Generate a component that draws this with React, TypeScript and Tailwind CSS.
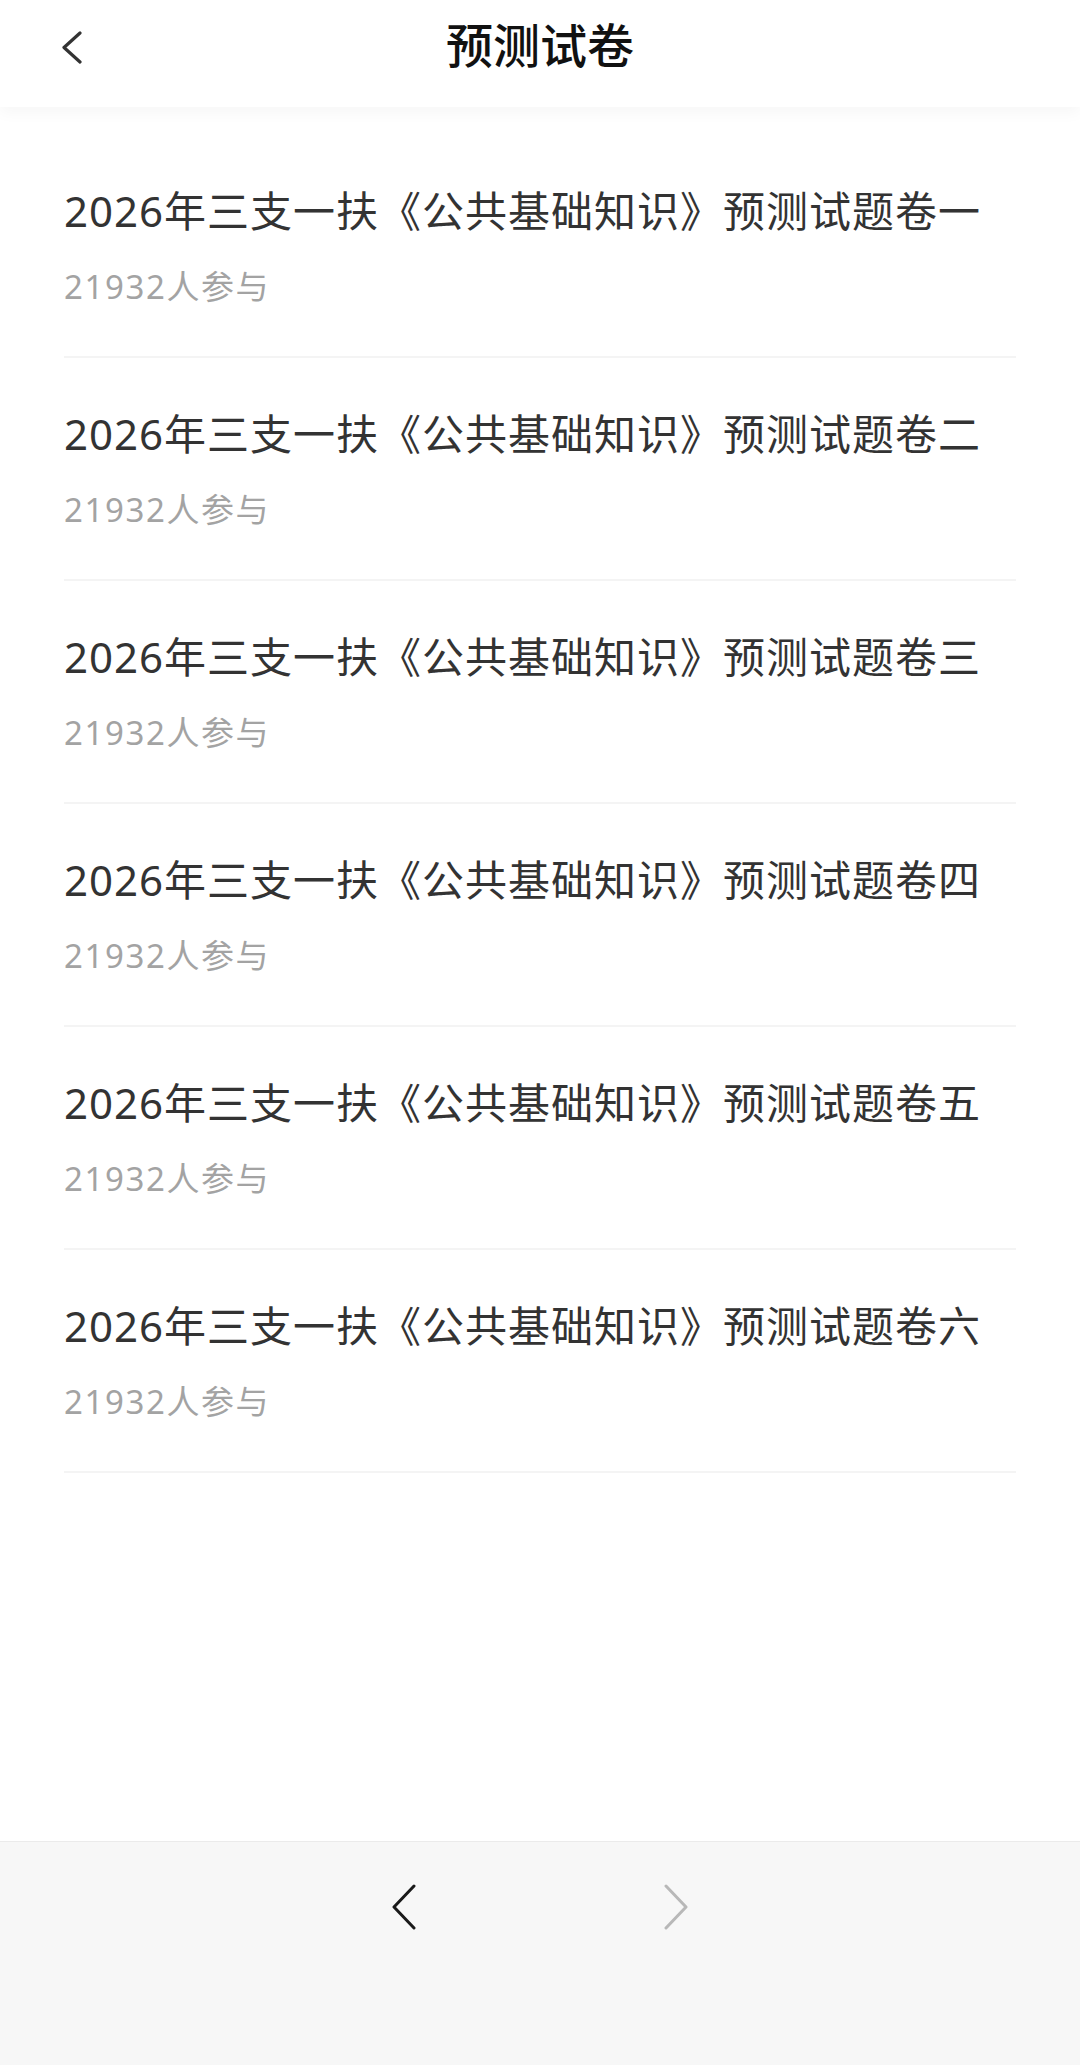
import React from "react";

const papers = ["一", "二", "三", "四", "五", "六"];

function Chevron({ dir, className }: { dir: "left" | "right"; className: string }) {
  return (
    <svg viewBox="0 0 24 46" className={className} fill="none" stroke="currentColor" strokeWidth={3} strokeLinecap="round" strokeLinejoin="round">
      {dir === "left" ? <path d="M22 2 L2 23 L22 44" /> : <path d="M2 2 L22 23 L2 44" />}
    </svg>
  );
}

export default function App() {
  return (
    <div
      className="flex h-[2065px] w-[1080px] flex-col bg-white"
      style={{ fontFamily: '"Noto Sans", "Noto Sans CJK SC", sans-serif' }}
    >
      <header className="relative z-10 flex h-[107px] shrink-0 items-center justify-center bg-white shadow-[0_6px_14px_rgba(0,0,0,0.035)]">
        <button className="absolute left-[62px] top-[31px] text-[#333]">
          <svg viewBox="0 0 20 33" className="h-[33px] w-[20px]" fill="none" stroke="currentColor" strokeWidth={3.2} strokeLinecap="round" strokeLinejoin="round">
            <path d="M18 2 L2 16.5 L18 31" />
          </svg>
        </button>
        <h1 className="-mt-[16px] text-[47px] font-medium leading-none text-[#111]">预测试卷</h1>
      </header>

      <main className="flex-1 px-[64px] pt-[28px]">
        {papers.map((n) => (
          <div key={n} className="border-b-2 border-[#f4f4f4] pb-[49px] pt-[51px]">
            <p className="text-[42px] leading-[50px] tracking-[1px] text-[#333]">2026年三支一扶《公共基础知识》预测试题卷{n}</p>
            <p className="mt-[31px] text-[33px] leading-[40px] tracking-[1.6px] text-[#a3a3a3]">21932人参与</p>
          </div>
        ))}
      </main>

      <footer className="flex h-[224px] shrink-0 justify-center gap-[248px] border-t border-[#ebebeb] bg-[#f7f7f7] pt-[42px]">
        <Chevron dir="left" className="h-[46px] w-[24px] text-[#1a1a1a]" />
        <Chevron dir="right" className="h-[46px] w-[24px] text-[#b8b8b8]" />
      </footer>
    </div>
  );
}
